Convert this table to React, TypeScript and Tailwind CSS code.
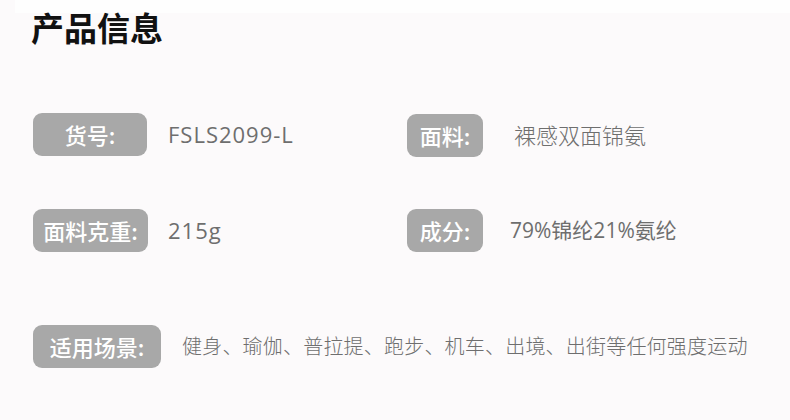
const font = { fontFamily: '"Noto Sans CJK SC", "Noto Sans", sans-serif' }
const valueFont = { fontFamily: '"Open Sans", "Noto Sans CJK SC", sans-serif' }

function Label({ text, className }: { text: string; className: string }) {
  return (
    <div
      className={`flex h-[43px] shrink-0 items-center justify-center rounded-[9px] bg-[#a8a8a8] text-[22px] font-medium text-white ${className}`}
    >
      {text}
    </div>
  )
}

function Value({ children, className }: { children: React.ReactNode; className: string }) {
  return (
    <span className={`text-[#6e6e6e] ${className}`} style={valueFont}>
      {children}
    </span>
  )
}

export default function App() {
  return (
    <div className="h-[420px] w-[790px] overflow-hidden bg-[#fcfafb]" style={font}>
      <div className="ml-[15px] h-[13px] bg-[#fefefe]" />
      <h1 className="ml-[31px] h-[28px] text-[33px] font-bold leading-[28px] text-[#111]">产品信息</h1>

      <div className="mt-[71px] flex pl-[33px]">
        <div className="flex w-[374px] items-center">
          <Label text="货号:" className="w-[114px]" />
          <Value className="ml-[21px] text-[22px] tracking-[1px]">FSLS2099-L</Value>
        </div>
        <div className="mt-[2px] flex items-center">
          <Label text="面料:" className="w-[76px]" />
          <Value className="ml-[31px] font-light text-[22px]">裸感双面锦氨</Value>
        </div>
      </div>

      <div className="mt-[52px] flex pl-[33px]">
        <div className="flex w-[374px] items-center">
          <Label text="面料克重:" className="w-[115px]" />
          <Value className="ml-[20px] text-[22px] tracking-[1px]">215g</Value>
        </div>
        <div className="flex items-center">
          <Label text="成分:" className="w-[76px]" />
          <Value className="ml-[27px] text-[21px]">79%锦纶21%氨纶</Value>
        </div>
      </div>

      <div className="mt-[73px] flex items-center pl-[33px]">
        <Label text="适用场景:" className="w-[128px]" />
        <Value className="ml-[21px] font-light text-[20px] tracking-[0.2px]">
          健身、瑜伽、普拉提、跑步、机车、出境、出街等任何强度运动
        </Value>
      </div>
    </div>
  )
}
